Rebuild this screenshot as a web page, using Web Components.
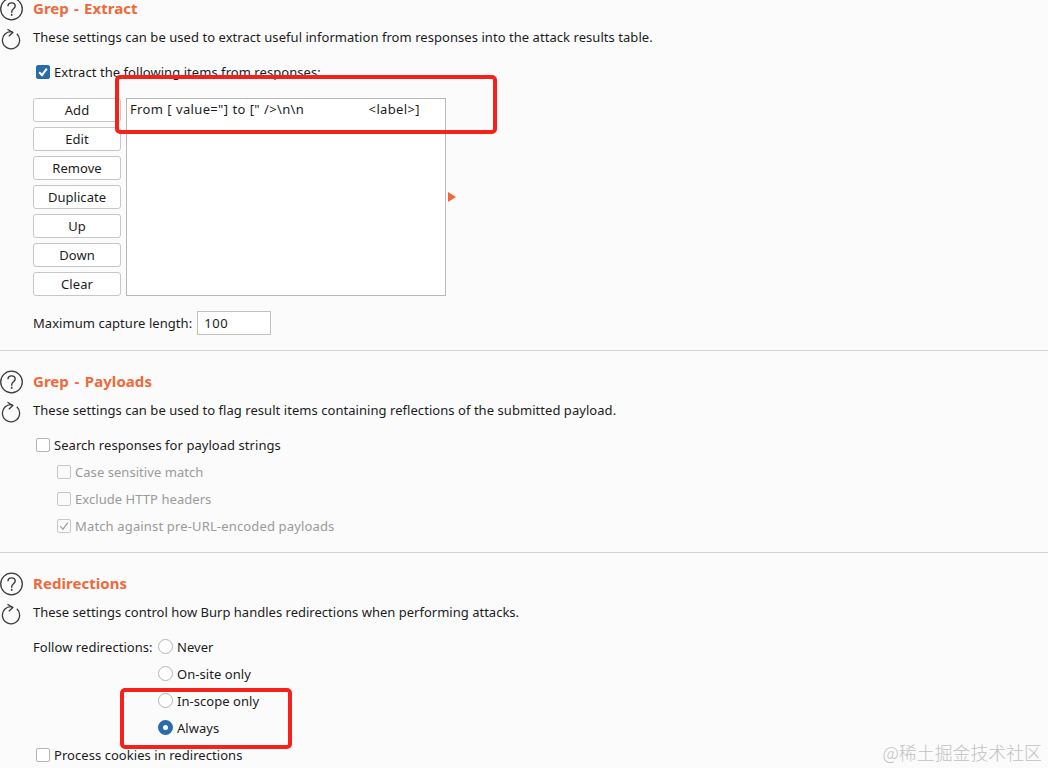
<!DOCTYPE html>
<html lang="en">
<head>
<meta charset="utf-8">
<style>
html, body { margin: 0; padding: 0; background: #fbfbfb; }
body { width: 1048px; height: 768px; overflow: hidden; position: relative; font: 13px "Noto Sans", "Noto Sans CJK SC", sans-serif; letter-spacing: .05px; color: #1c1c1c; }
</style>
</head>
<body>
<script>
const HELP_ICON = `<svg width="24" height="24" viewBox="0 0 24 24" fill="none" stroke="#3a3a3a"><circle cx="11.5" cy="12" r="10.8" stroke-width="1.3"/><path d="M8 9.3c0-2 1.5-3.4 3.6-3.4s3.6 1.3 3.6 3.2c0 2.7-3.5 2.7-3.5 5.7v.9" stroke-width="1.4"/><path d="M11.7 16.8v2" stroke-width="1.6"/></svg>`;
const REFRESH_ICON = `<svg width="20" height="22" viewBox="0 0 20 22" fill="none" stroke="#3a3a3a" stroke-width="1.3"><path d="M15.8 5.8A8.6 8.6 0 1 1 11.5 3.7"/><path d="M6.5 1.2 11.8 4.6 7.8 8.2"/></svg>`;

// one settings block: help + refresh icons, heading, description, then whatever is slotted
class BurpSection extends HTMLElement {
    constructor() {
        super();
        this.attachShadow({ mode: 'open' });
        this.shadowRoot.innerHTML = `
<style>
:host { display: block; border-bottom: 1px solid #d4d4d4; padding: 20px 0 var(--section-bottom, 13px); }
:host([last]) { border-bottom: none; }
.head { display: grid; grid-template-columns: 33px 1fr; grid-template-rows: 20px 20px; row-gap: 9px; }
.help { margin-top: -1px; line-height: 0; }
.refresh { margin: 1px 0 0 1px; line-height: 0; }
h2 { margin: 0; font-size: 15px; line-height: 20px; font-weight: 700; color: #f0693a; word-spacing: var(--title-word, 0); }
p { margin: 0; line-height: 20px; letter-spacing: var(--text-spacing, inherit); }
.body { padding: 11px 0 0 33px; }
</style>
<div class="head">
    <div class="help">${HELP_ICON}</div>
    <h2></h2>
    <div class="refresh">${REFRESH_ICON}</div>
    <p></p>
</div>
<div class="body"><slot></slot></div>`;
    }

    connectedCallback() {
        this.shadowRoot.querySelector('h2').textContent = this.getAttribute('heading');
        this.shadowRoot.querySelector('p').textContent = this.getAttribute('text');
    }
}

class BurpCheck extends HTMLElement {
    constructor() {
        super();
        this.attachShadow({ mode: 'open' });
        this.shadowRoot.innerHTML = `
<style>
:host { display: flex; align-items: center; gap: 4px; height: 27px; margin-left: 3px; }
:host([sub]) { margin-left: 24px; }
:host([disabled]) { color: #9a9a9a; }
.box { width: 12px; height: 12px; border: 1px solid #b4b4b4; border-radius: 2px; background: #fff; flex: none; line-height: 0; }
:host([disabled]) .box { border-color: #c8c8c8; background: #fafafa; }
:host([checked]) .box { background: #2a6ca8; border-color: #2a6ca8; }
:host([checked][disabled]) .box { background: #fafafa; border-color: #c8c8c8; }
svg { display: none; }
:host([checked]) svg { display: block; }
path { fill: none; stroke: #fff; stroke-width: 2; }
:host([disabled]) path { stroke: #a0a0a0; stroke-width: 1.2; }
</style>
<span class="box"><svg width="12" height="12" viewBox="0 0 12 12"><path d="M2.2 6.2 5 9.2 9.8 2.6"/></svg></span>
<slot></slot>`;
    }
}

class BurpRadio extends HTMLElement {
    constructor() {
        super();
        this.attachShadow({ mode: 'open' });
        this.shadowRoot.innerHTML = `
<style>
:host { display: flex; align-items: center; gap: 4px; height: 27px; }
.dot { width: 13px; height: 13px; border: 1px solid #b4b4b4; border-radius: 50%; background: #fff; flex: none; box-sizing: content-box; }
:host([checked]) .dot { width: 5px; height: 5px; border: 5px solid #2a6ca8; }
</style>
<span class="dot"></span>
<slot></slot>`;
    }
}

class BurpButton extends HTMLElement {
    constructor() {
        super();
        this.attachShadow({ mode: 'open' });
        this.shadowRoot.innerHTML = `
<style>
:host { display: flex; align-items: center; justify-content: center; height: 22px; border: 1px solid #c6c6c6; border-radius: 3px; background: #fff; }
</style>
<slot></slot>`;
    }
}

// Add/Edit/... column next to the items list
class ExtractList extends HTMLElement {
    constructor() {
        super();
        this.attachShadow({ mode: 'open' });
        this.shadowRoot.innerHTML = `
<style>
:host { display: grid; grid-template-columns: 88px 320px 11px; column-gap: 5px; margin-top: 13px; height: 198px; }
.buttons { display: flex; flex-direction: column; gap: 5px; }
.list { box-sizing: border-box; border: 1px solid #b8b8b8; background: #fff; padding: 0 3px; line-height: 20px; white-space: pre; letter-spacing: .35px; word-spacing: .3px; }
.arrow { align-self: center; width: 0; height: 0; margin-left: -3px; border-left: 8px solid #f0693a; border-top: 5px solid transparent; border-bottom: 5px solid transparent; }
</style>
<div class="buttons"><slot></slot></div>
<div class="list"></div>
<div class="arrow"></div>`;
    }

    connectedCallback() {
        this.shadowRoot.querySelector('.list').textContent = this.getAttribute('item');
    }
}

class CaptureLength extends HTMLElement {
    constructor() {
        super();
        this.attachShadow({ mode: 'open' });
        this.shadowRoot.innerHTML = `
<style>
:host { display: flex; align-items: center; gap: 5px; margin-top: 15px; height: 24px; }
.field { box-sizing: border-box; width: 74px; height: 24px; border: 1px solid #c0c0c0; background: #fff; padding-left: 6px; line-height: 22px; letter-spacing: .6px; }
</style>
<slot></slot>
<div class="field">100</div>`;
    }
}

class RedirectOptions extends HTMLElement {
    constructor() {
        super();
        this.attachShadow({ mode: 'open' });
        this.shadowRoot.innerHTML = `
<style>
:host { display: grid; grid-template-columns: 125px 1fr; }
.label { display: flex; align-items: center; height: 27px; }
</style>
<div class="label">Follow redirections:</div>
<div><slot></slot></div>`;
    }
}

// hand-drawn red annotation laid over the screenshot
class RedMark extends HTMLElement {
    constructor() {
        super();
        this.attachShadow({ mode: 'open' });
        this.shadowRoot.innerHTML = `
<style>
:host { display: block; position: absolute; box-sizing: border-box; border: 4px solid #f5221b; border-radius: 5px; }
</style>`;
    }
}

class WaterMark extends HTMLElement {
    constructor() {
        super();
        this.attachShadow({ mode: 'open' });
        this.shadowRoot.innerHTML = `
<style>
:host { position: absolute; right: 6px; bottom: 5px; font: 300 17.9px/22px "Noto Sans CJK SC", sans-serif; letter-spacing: 0; color: #c2c2c2; }
</style>
<slot></slot>`;
    }
}

customElements.define('burp-section', BurpSection);
customElements.define('burp-check', BurpCheck);
customElements.define('burp-radio', BurpRadio);
customElements.define('burp-button', BurpButton);
customElements.define('extract-list', ExtractList);
customElements.define('capture-length', CaptureLength);
customElements.define('redirect-options', RedirectOptions);
customElements.define('red-mark', RedMark);
customElements.define('water-mark', WaterMark);
</script>

<burp-section style="margin-top:-22px;--section-bottom:15px;--title-word:1.2px" heading="Grep - Extract" text="These settings can be used to extract useful information from responses into the attack results table.">
    <burp-check checked>Extract the following items from responses:</burp-check>
    <extract-list item='From [ value="] to [" />\n\n                <label>]'>
        <burp-button>Add</burp-button>
        <burp-button>Edit</burp-button>
        <burp-button>Remove</burp-button>
        <burp-button>Duplicate</burp-button>
        <burp-button>Up</burp-button>
        <burp-button>Down</burp-button>
        <burp-button>Clear</burp-button>
    </extract-list>
    <capture-length>Maximum capture length:</capture-length>
</burp-section>

<burp-section style="--title-word:1.6px" heading="Grep - Payloads" text="These settings can be used to flag result items containing reflections of the submitted payload.">
    <burp-check>Search responses for payload strings</burp-check>
    <burp-check sub disabled>Case sensitive match</burp-check>
    <burp-check sub disabled>Exclude HTTP headers</burp-check>
    <burp-check sub disabled checked style="letter-spacing:.15px">Match against pre-URL-encoded payloads</burp-check>
</burp-section>

<burp-section last style="--text-spacing:.01px" heading="Redirections" text="These settings control how Burp handles redirections when performing attacks.">
    <redirect-options>
        <burp-radio>Never</burp-radio>
        <burp-radio>On-site only</burp-radio>
        <burp-radio>In-scope only</burp-radio>
        <burp-radio checked>Always</burp-radio>
    </redirect-options>
    <burp-check>Process cookies in redirections</burp-check>
</burp-section>

<red-mark style="left:115px;top:75px;width:382px;height:59px"></red-mark>
<red-mark style="left:120px;top:688px;width:172px;height:61px"></red-mark>
<water-mark>@稀土掘金技术社区</water-mark>
</body>
</html>
